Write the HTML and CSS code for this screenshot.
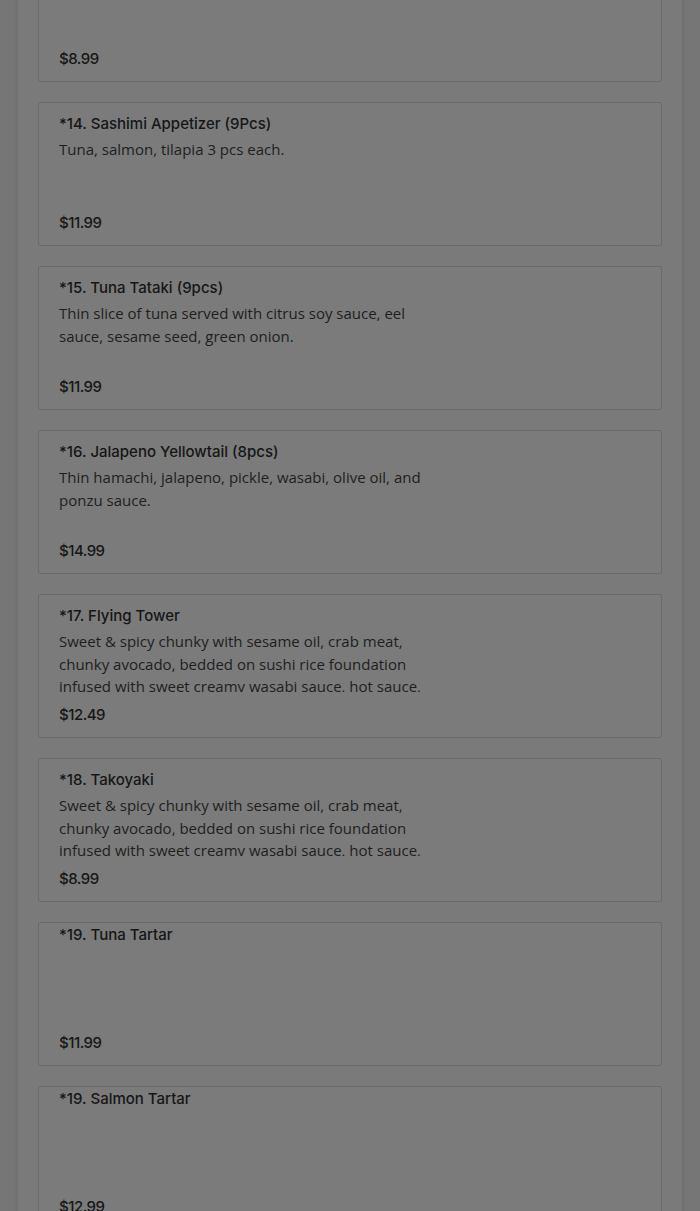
FILE: index.html
```html
<!DOCTYPE html>
<html lang="en">
<head>
<meta charset="utf-8">
<title>Menu</title>
<link rel="stylesheet" href="styles.css">
</head>
<body>
<div class="panel">
  <div class="list">
    <div class="card card-short">
      <div class="title">*13. Sushi Appetizer</div>
      <div class="price">$8.99</div>
    </div>
    <div class="card">
      <div class="title">*14. Sashimi Appetizer (9Pcs)</div>
      <div class="desc">Tuna, salmon, tilapia 3 pcs each.</div>
      <div class="price">$11.99</div>
    </div>
    <div class="card">
      <div class="title">*15. Tuna Tataki (9pcs)</div>
      <div class="desc">Thin slice of tuna served with citrus soy sauce, eel sauce, sesame seed, green onion.</div>
      <div class="price">$11.99</div>
    </div>
    <div class="card">
      <div class="title">*16. Jalapeno Yellowtail (8pcs)</div>
      <div class="desc">Thin hamachi, jalapeno, pickle, wasabi, olive oil, and ponzu sauce.</div>
      <div class="price">$14.99</div>
    </div>
    <div class="card">
      <div class="title">*17. Flying Tower</div>
      <div class="desc">Sweet &amp; spicy chunky with sesame oil, crab meat, chunky avocado, bedded on sushi rice foundation infused with sweet creamy wasabi sauce, hot sauce, eel sauce and crunchy flakes.</div>
      <div class="price">$12.49</div>
    </div>
    <div class="card">
      <div class="title">*18. Takoyaki</div>
      <div class="desc">Sweet &amp; spicy chunky with sesame oil, crab meat, chunky avocado, bedded on sushi rice foundation infused with sweet creamy wasabi sauce, hot sauce, eel sauce and crunchy flakes.</div>
      <div class="price">$8.99</div>
    </div>
    <div class="card card-short">
      <div class="title">*19. Tuna Tartar</div>
      <div class="price">$11.99</div>
    </div>
    <div class="card card-short">
      <div class="title">*19. Salmon Tartar</div>
      <div class="price">$12.99</div>
    </div>
  </div>
</div>
</body>
</html>
```
FILE: styles.css
```css
html, body {
  margin: 0;
  padding: 0;
}
body {
  background: #767676;
  height: 1211px;
  overflow: hidden;
  font-family: "Open Sans", "Liberation Sans", sans-serif;
  color: #1c1c1c;
}
.panel {
  margin: 0 18px;
  padding: 0 20px 40px;
  background: #7a7a7a;
  box-shadow: 0 0 4px rgba(0, 0, 0, 0.12);
  min-height: 1211px;
}
.list {
  display: flex;
  flex-direction: column;
  gap: 20px;
  margin-top: -62px;
}
.card {
  box-sizing: border-box;
  height: 144px;
  border: 1px solid #6b6b6b;
  border-radius: 2px;
  background: #7b7b7b;
  padding: 10px 20px 11px;
  display: flex;
  flex-direction: column;
}
.card-short {
  padding-top: 1px;
}
.title {
  font-family: "Inter", "Liberation Sans", sans-serif;
  font-weight: 500;
  font-size: 15px;
  line-height: 21px;
  color: #161616;
}
.desc {
  margin-top: 4px;
  height: 62px;
  overflow: hidden;
  max-width: 380px;
  font-size: 15px;
  line-height: 22.5px;
  color: #1e1e1e;
}
.price {
  margin-top: auto;
  font-family: "Inter", "Liberation Sans", sans-serif;
  font-weight: 500;
  font-size: 15px;
  line-height: 22px;
  letter-spacing: -0.5px;
  color: #161616;
}
```
